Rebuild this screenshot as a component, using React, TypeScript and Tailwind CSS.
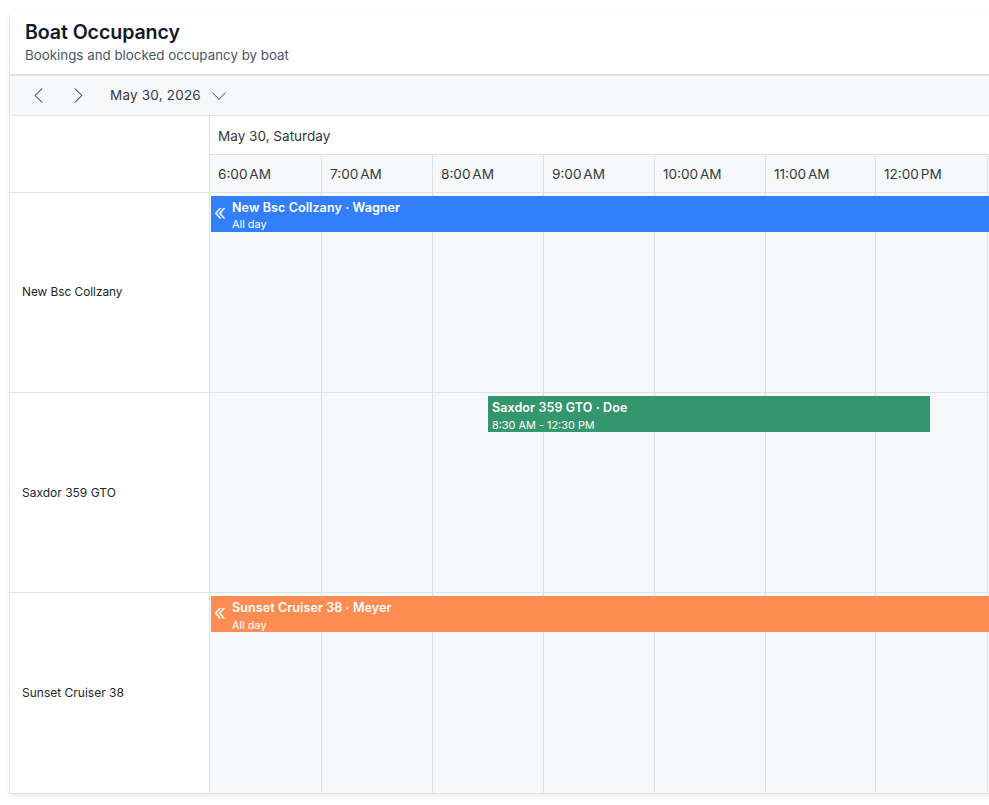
import React from "react";
import { ChevronLeft, ChevronRight, ChevronDown } from "lucide-react";

const times = [
  { t: "6:00 AM", w: "w-[112px]" },
  { t: "7:00 AM", w: "w-[111px]" },
  { t: "8:00 AM", w: "w-[111px]" },
  { t: "9:00 AM", w: "w-[111px]" },
  { t: "10:00 AM", w: "w-[111px]" },
  { t: "11:00 AM", w: "w-[110px]" },
  { t: "12:00 PM", w: "w-[112px]" },
  { t: "1:00 PM", w: "w-[111px]" },
];

function Cols() {
  return (
    <div className="flex h-full">
      {times.map(({ t, w }) => (
        <div key={t} className={`${w} shrink-0 border-r border-[#dee2e6] bg-[#f7f8fa]`} />
      ))}
    </div>
  );
}

function Event({ title, sub, color, chevron, left, width, gap }: { title: string; sub: string; color: string; chevron?: boolean; left: string; width: string; gap: string }) {
  return (
    <div className={`absolute top-[3px] h-[36px] flex items-center text-white ${color} ${left} ${width}`}>
      {chevron && <span className="w-[21px] shrink-0 text-center text-[23px] leading-none -mt-[3px] pr-[3px] font-light">«</span>}
      <div className={chevron ? "pt-[3px]" : "pl-[4px] pt-[3px]"}>
        <div className="text-[12.5px] leading-[15px] font-semibold tracking-[0.1px] whitespace-nowrap">{title}</div>
        <div className={`text-[10.9px] leading-[13px] whitespace-nowrap ${gap}`}>{sub}</div>
      </div>
    </div>
  );
}

function Row({ name, h, label, children }: { name: string; h: string; label: string; children?: React.ReactNode }) {
  return (
    <div className={`flex border-b border-[#dee2e6] ${h}`}>
      <div className={`w-[200px] shrink-0 border-r border-[#dee2e6] flex items-center pl-[12px] text-[#212529] bg-white ${label}`}>{name}</div>
      <div className="relative w-[860px] shrink-0">
        <Cols />
        {children}
      </div>
    </div>
  );
}

export default function App() {
  return (
    <div className="h-[805px] w-[989px] overflow-hidden bg-white" style={{ fontFamily: "Inter, 'Liberation Sans', sans-serif" }}>
      <div className="ml-[9px] mt-[14px] w-[1100px] border-l border-[#e3e5e8] shadow-[0_2px_6px_rgba(0,0,0,0.08)]">
        <div className="h-[62px] pl-[15px] pt-[6px] bg-white border-b-2 border-[#dcdfe3]">
          <div className="text-[19.6px] leading-[24px] font-semibold text-[#111827] tracking-[-0.1px]">Boat Occupancy</div>
          <div className="text-[13.35px] leading-[18px] mt-[2px] text-[#4b5563]">Bookings and blocked occupancy by boat</div>
        </div>
        <div className="h-[40px] flex items-center bg-[#f7f8fa] border-b border-[#e3e5e8] text-[#343a40]">
          <ChevronLeft className="ml-[15px] w-[27px] h-[27px]" strokeWidth={0.9} />
          <ChevronRight className="ml-[13px] w-[27px] h-[27px]" strokeWidth={0.9} />
          <span className="ml-[18px] text-[13.5px] tracking-[0.2px]">May 30, 2026</span>
          <ChevronDown className="ml-[5px] w-[26px] h-[26px]" strokeWidth={0.85} />
        </div>
        <div className="flex border-b border-[#dee2e6]">
          <div className="w-[200px] shrink-0 border-r border-[#dee2e6] bg-white" />
          <div className="w-[860px] shrink-0">
            <div className="h-[39px] flex items-center pl-[8px] pt-[2px] text-[13.55px] text-[#343a40] bg-white border-b border-[#dee2e6]">May 30, Saturday</div>
            <div className="flex h-[37px]">
              {times.map(({ t, w }) => (
                <div key={t} className={`${w} shrink-0 flex items-center pl-[8px] pt-[2px] text-[13.6px] [word-spacing:-2px] whitespace-nowrap text-[#343a40] bg-[#f7f8fa] border-r border-[#dee2e6]`}>{t}</div>
              ))}
            </div>
          </div>
        </div>
        <Row name="New Bsc Collzany" h="h-[200px]" label="text-[11.8px]">
          <Event title="New Bsc Collzany · Wagner" sub="All day" color="bg-[#337ffa]" chevron left="left-[1px]" width="w-[860px]" gap="mt-[3px]" />
        </Row>
        <Row name="Saxdor 359 GTO" h="h-[200px]" label="text-[12px] pt-[1px]">
          <Event title="Saxdor 359 GTO · Doe" sub="8:30 AM - 12:30 PM" color="bg-[#33966d]" left="left-[278px]" width="w-[442px]" gap="mt-[4px]" />
        </Row>
        <Row name="Sunset Cruiser 38" h="h-[201px]" label="text-[12px]">
          <Event title="Sunset Cruiser 38 · Meyer" sub="All day" color="bg-[#fd8d52]" chevron left="left-[1px]" width="w-[860px]" gap="mt-[4px]" />
        </Row>
      </div>
    </div>
  );
}
